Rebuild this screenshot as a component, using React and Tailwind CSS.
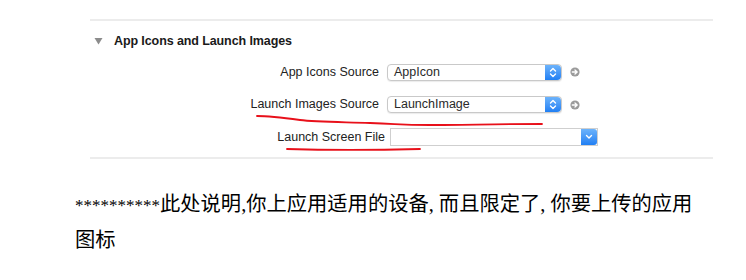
import React from 'react'

function Stepper() {
  return (
    <div className="w-[16px] h-full rounded-r-[4px] bg-gradient-to-b from-[#6cb3fb] to-[#1f7ff3] flex items-center justify-center">
      <svg width="8" height="11" viewBox="0 0 8 11" fill="none" stroke="white" strokeWidth="1.4" strokeLinecap="round" strokeLinejoin="round">
        <path d="M1.5 4 L4 1.5 L6.5 4" />
        <path d="M1.5 7 L4 9.5 L6.5 7" />
      </svg>
    </div>
  )
}

function GoArrow() {
  return (
    <svg width="10" height="10" viewBox="0 0 10 10" className="ml-[8px]">
      <circle cx="5" cy="5" r="4.6" fill="#9b9b9b" />
      <path d="M2.3 5 H6.8 M5 3 L7.2 5 L5 7" stroke="white" strokeWidth="1.3" fill="none" strokeLinecap="round" strokeLinejoin="round" />
    </svg>
  )
}

function Popup({ value }) {
  return (
    <div className="flex items-center">
      <div className="w-[175px] h-[17px] flex rounded-[4px] border border-[#c9c9c9] bg-white shadow-[0_1px_1px_rgba(0,0,0,0.08)]">
        <div className="flex-1 pl-[6px] text-[12.5px] leading-[15px] text-[#2a2a2a]">{value}</div>
        <Stepper />
      </div>
      <GoArrow />
    </div>
  )
}

function Combo() {
  return (
    <div className="w-[208px] h-[18px] flex border border-[#cfcfcf] bg-white">
      <div className="flex-1" />
      <div className="w-[16px] h-full rounded-r-[3px] bg-gradient-to-b from-[#6cb3fb] to-[#1f7ff3] flex items-center justify-center">
        <svg width="8" height="6" viewBox="0 0 8 6" fill="none" stroke="white" strokeWidth="1.4" strokeLinecap="round" strokeLinejoin="round">
          <path d="M1.5 1.5 L4 4 L6.5 1.5" />
        </svg>
      </div>
    </div>
  )
}

export default function App() {
  return (
    <div className="relative w-[746px] h-[280px] bg-white overflow-hidden" style={{ fontFamily: '"Liberation Sans", Arial, sans-serif' }}>
      {/* Xcode-style settings section */}
      <div className="ml-[90px] w-[623px] pt-[19px]">
        <div className="h-[2px] bg-[#ececec]" />
        <div className="flex items-center h-[30px] mt-[5px] pl-[4px]">
          <svg width="9" height="8" viewBox="0 0 9 8" className="mr-[11px]">
            <path d="M0.5 1 H8.5 L4.5 7.5 Z" fill="#8c8c8c" />
          </svg>
          <span className="text-[12.5px] font-bold text-[#1a1a1a] tracking-[-0.1px]">App Icons and Launch Images</span>
        </div>

        <div className="flex flex-col">
          <div className="flex items-center h-[32px]">
            <div className="w-[297px] text-right text-[12.5px] text-[#222] pr-[8px]">App Icons Source</div>
            <Popup value="AppIcon" />
          </div>
          <div className="flex items-center h-[33px]">
            <div className="w-[297px] text-right text-[12.5px] text-[#222] pr-[8px]">Launch Images Source</div>
            <Popup value="LaunchImage" />
          </div>
          <div className="flex items-center h-[32px]">
            <div className="w-[300px] text-right text-[12.5px] text-[#222] pr-[5px]">Launch Screen File</div>
            <Combo />
          </div>
        </div>
        <div className="mt-[4px] h-[2px] bg-[#ececec]" />
      </div>

      {/* red hand-drawn underlines */}
      <svg className="absolute left-0 top-0 pointer-events-none" width="746" height="280">
        <path d="M257 116 C 270 116, 285 118, 300 120 S 340 122, 370 123 S 400 125, 430 125 S 500 124, 542 124" stroke="#e8101a" strokeWidth="1.8" fill="none" strokeLinecap="round" />
        <path d="M287 149 C 320 150, 380 150, 420 149" stroke="#e8101a" strokeWidth="1.8" fill="none" strokeLinecap="round" />
      </svg>

      <div className="ml-[75px] mt-[28px] leading-[35px] text-[#000]" style={{ fontFamily: '"Liberation Serif", "Noto Sans CJK SC", serif' }}>
        <div className="whitespace-nowrap">
          <span className="text-[17px]">**********</span>
          <span className="text-[20.3px]">此处说明,你上应用适用的设备, 而且限定了, 你要上传的应用</span>
        </div>
        <div className="text-[20.3px]">图标</div>
      </div>
    </div>
  )
}
